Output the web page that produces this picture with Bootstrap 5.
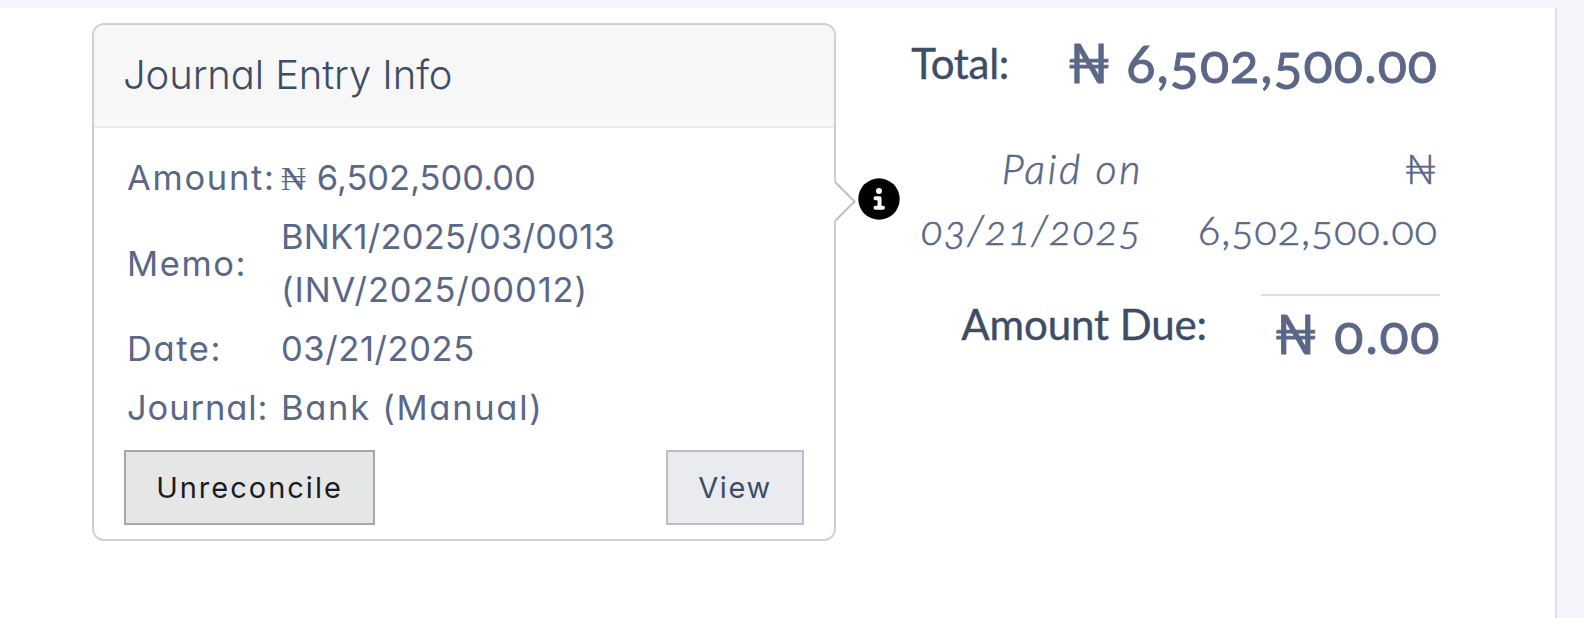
<!DOCTYPE html>
<html lang="en">
<head>
<meta charset="utf-8">
<title>Journal Entry Info</title>
<link href="https://cdn.jsdelivr.net/npm/bootstrap@5.3.0/dist/css/bootstrap.min.css" rel="stylesheet">
<script src="https://cdn.jsdelivr.net/npm/bootstrap@5.3.0/dist/js/bootstrap.bundle.min.js"></script>
<style>
  body { background: #f4f5fa; color: #5a6787; font-family: Lato, sans-serif; height: 618px; overflow: hidden; padding-top: 8px; }
  .sheet { width: 1557px; height: 610px; background: #fff; border-right: 2px solid #dde0eb; padding: 15px 115px 0 92px; }

  .entry { width: 744px; height: 518px; border: 2px solid #d0d0d0; border-radius: 12px; font-family: Inter, sans-serif; font-feature-settings: "cv11"; white-space: nowrap; }
  .entry-head { height: 103px; background: #f7f7f7; border-bottom: 2px solid #ebebeb; border-radius: 10px 10px 0 0; padding: 0 0 1px 29px; color: #3d4d66; font-size: 40px; font-weight: 300; letter-spacing: -.1px; }
  .entry-body { padding: 23px 30px 0 30px; }
  .facts { display: grid; grid-template-columns: 154px 1fr; row-gap: 6px; align-items: center; margin-left: 3px; font-size: 34.5px; line-height: 53px; }
  .naira-serif { font-family: "Liberation Serif", serif; display: inline-block; width: 26px; letter-spacing: 0; line-height: 1; }
  .ls-n { letter-spacing: 0 } .ls-o { letter-spacing: .25px } .ls-a { letter-spacing: .6px } .ls-b { letter-spacing: .9px } .ls-c { letter-spacing: 1.7px } .ls-d { letter-spacing: 1.6px }
  .act { height: 75px; border: 2px solid; border-radius: 0; padding: 0; font-size: 29px; line-height: 67px; }
  .act-un { width: 251px; background: #e5e7e6; border-color: #a6a9a8; color: #1b1c20; letter-spacing: 2px; }
  .act-view { width: 138px; background: #e9ebef; border-color: #b9c0ca; color: #3d4d66; letter-spacing: 1.6px; }
  .pointer { position: absolute; left: 100%; top: 156px; margin-left: -1px; }
  .info { margin: 155px 0 0 21.5px; }

  .sums { font-feature-settings: "onum"; white-space: nowrap; text-align: right; }
  .sum-label { color: #3d4d66; font-size: 42px; letter-spacing: -.3px; -webkit-text-stroke: .4px; }
  .sum-big { font-size: 54px; letter-spacing: 1px; line-height: 76px; -webkit-text-stroke: .9px; }
  .row-total { height: 78px; padding-top: 2px; }
  .row-total .sum-big { width: 431px; padding-right: 2px; }
  .row-paid { margin-top: 36.5px; font-size: 41px; line-height: 61.5px; font-weight: 300; letter-spacing: 1.1px; -webkit-text-stroke: .6px; }
  .row-paid .paid-sum { width: 298px; padding-right: 2px; }
  .paid-on { letter-spacing: 2.6px; margin-right: -1px; }
  .row-due { margin-top: 33px; }
  .row-due .sum-label { line-height: 61px; letter-spacing: -.1px; }
  .row-due .sum-big { width: 179px; margin-left: 54px; border-top: 2px solid #dde0eb; letter-spacing: 1.6px; }
  .row-due .sum-big span { margin-right: -1px; }
</style>
</head>
<body>
<main class="sheet d-flex align-items-start">
  <section class="entry position-relative flex-shrink-0">
    <div class="entry-head d-flex align-items-center">Journal Entry Info</div>
    <div class="entry-body">
      <div class="facts">
        <div class="ls-c">Amount:</div><div class="ls-n"><span class="naira-serif">₦</span> 6,502,500.00</div>
        <div class="ls-d">Memo:</div><div><span class="ls-o">BNK1/2025/03/0013</span><br><span class="ls-b">(INV/2025/00012)</span></div>
        <div class="ls-d">Date:</div><div class="ls-a">03/21/2025</div>
        <div class="ls-b">Journal:</div><div class="ls-c">Bank (Manual)</div>
      </div>
      <div class="d-flex justify-content-between mt-3">
        <button class="btn act act-un" type="button">Unreconcile</button>
        <button class="btn act act-view" type="button">View</button>
      </div>
    </div>
    <svg class="pointer" width="24" height="42" viewBox="0 0 24 42"><path d="M0 1H3L21.500 20.500 3 40H0Z" fill="#fff"/><path d="M2 1 21.500 20.500 2 40" fill="none" stroke="#bfbfbf" stroke-width="2"/></svg>
  </section>
  <svg class="info flex-shrink-0" width="42" height="42" viewBox="0 0 42 42"><circle cx="21" cy="21" r="20.700" fill="#000"/><circle cx="21" cy="13" r="3" fill="#fff"/><path d="M17.500 20.300H21.500V29.500M17.500 29.800H25" fill="none" stroke="#fff" stroke-width="4" stroke-linecap="round" stroke-linejoin="round"/></svg>
  <section class="sums ms-auto">
    <div class="row-total d-flex justify-content-end align-items-center">
      <div class="sum-label">Total:</div><div class="sum-big">₦ 6,502,500.00</div>
    </div>
    <div class="row-paid d-flex justify-content-end">
      <div class="fst-italic"><span class="paid-on">Paid on</span><br>03/21/2025</div><div class="paid-sum">₦<br>6,502,500.00</div>
    </div>
    <div class="row-due d-flex justify-content-end align-items-start">
      <div class="sum-label">Amount Due:</div><div class="sum-big"><span>₦ 0.00</span></div>
    </div>
  </section>
</main>
</body>
</html>
